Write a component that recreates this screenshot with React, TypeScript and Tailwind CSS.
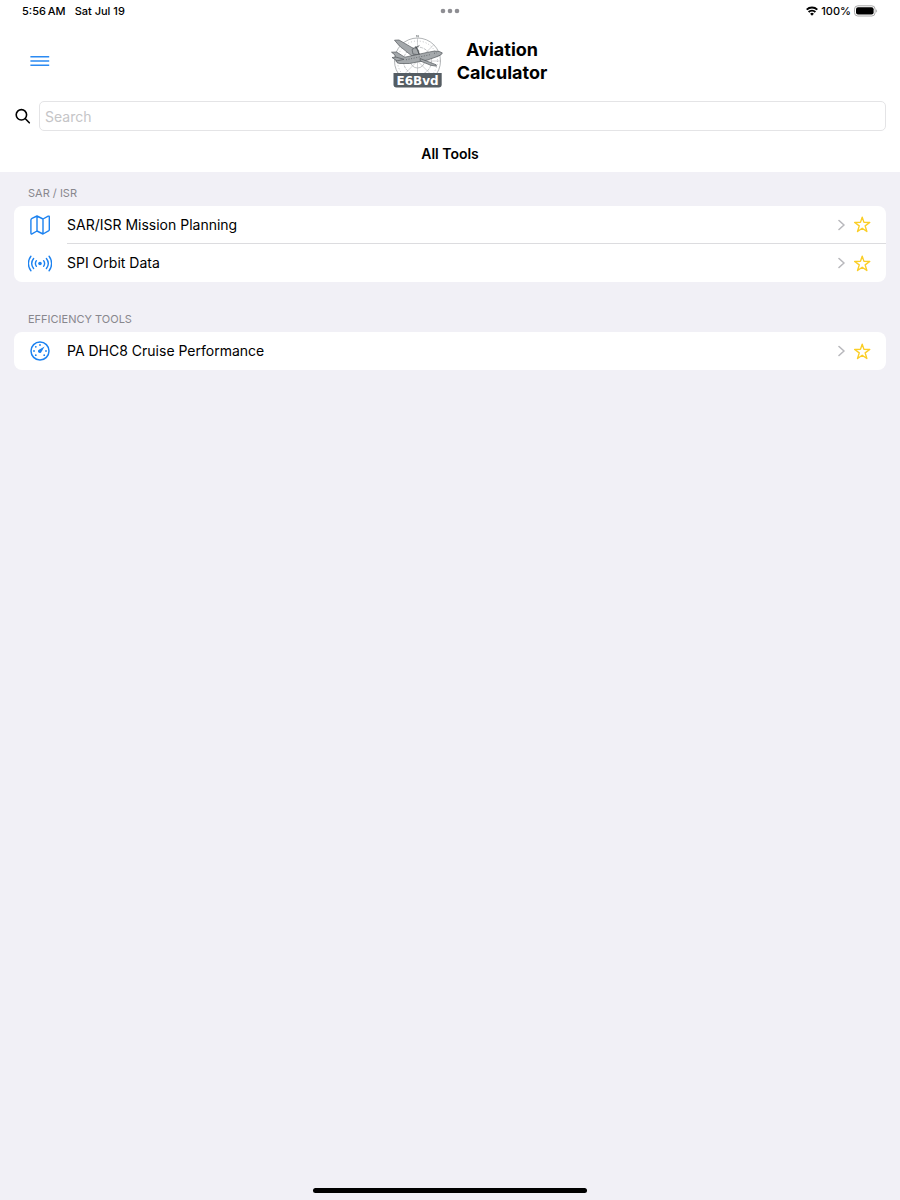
import type { ReactNode } from 'react'

type Tool = { name: string; icon: ReactNode }

const SECTIONS: { title: string; tools: Tool[] }[] = [
  {
    title: 'SAR / ISR',
    tools: [
      { name: 'SAR/ISR Mission Planning', icon: <MapIcon /> },
      { name: 'SPI Orbit Data', icon: <RadioIcon /> },
    ],
  },
  {
    title: 'EFFICIENCY TOOLS',
    tools: [{ name: 'PA DHC8 Cruise Performance', icon: <GaugeIcon /> }],
  },
]

export default function App() {
  return (
    <div className="min-h-screen flex flex-col bg-[#f1f0f6] text-black font-[Inter,sans-serif]">
      <div className="bg-white">
        <StatusBar />
        <Header />
        <SearchBar />
        <h2 className="pt-[13px] pb-2 text-center text-[14px] leading-5 font-semibold">All Tools</h2>
      </div>

      <main className="flex-1 px-3.5">
        {SECTIONS.map((section) => (
          <ToolSection key={section.title} title={section.title} tools={section.tools} />
        ))}
      </main>

      <footer className="flex justify-center pb-[7px]">
        <div className="h-[5px] w-[274px] rounded-full bg-black" />
      </footer>
    </div>
  )
}

function StatusBar() {
  return (
    <div className="grid grid-cols-3 items-center h-[22px] px-[22px] text-[11px] leading-4 font-medium">
      <div className="flex gap-[9px]">
        <span>5:56{'\u2009'}AM</span>
        <span>Sat Jul 19</span>
      </div>
      <svg className="w-5 h-[6px] justify-self-center" viewBox="0 0 20 6" fill="#8e8e93">
        <circle cx="3" cy="3" r="2.3" />
        <circle cx="10" cy="3" r="2.3" />
        <circle cx="17" cy="3" r="2.3" />
      </svg>
      <div className="flex items-center justify-end gap-[3px]">
        <WifiIcon />
        <span>100%</span>
        <BatteryIcon />
      </div>
    </div>
  )
}

function Header() {
  return (
    <header className="flex items-center h-[79px] pl-[30px] pr-3 pb-0.5">
      <button aria-label="Menu">
        <svg className="w-5 h-5" viewBox="0 0 20 20" fill="none" stroke="#2b8af2" strokeWidth={1.5}>
          <path d="M.4 5.7h18.8M.4 10h18.8M.4 14.3h18.8" />
        </svg>
      </button>
      <div className="flex-1 flex items-center justify-center gap-3.5">
        <Logo />
        <h1 className="text-[18px] leading-[23px] font-bold text-center">
          Aviation
          <br />
          Calculator
        </h1>
      </div>
    </header>
  )
}

function SearchBar() {
  return (
    <div className="flex items-center gap-2 pl-[15px] pr-3.5">
      <label htmlFor="search" aria-label="Search">
        <svg className="w-4 h-4" viewBox="0 0 16 16" fill="none" stroke="currentColor" strokeWidth={1.6} strokeLinecap="round">
          <circle cx="6.4" cy="6.8" r="5.2" />
          <path d="M10.4 10.8 14.3 14.8" />
        </svg>
      </label>
      <input
        id="search"
        type="text"
        placeholder="Search"
        className="flex-1 min-w-0 h-[30px] px-[5px] rounded-[5px] border border-[#e4e4e6] bg-white text-[14px] outline-none placeholder:text-[#c5c5c7]"
      />
    </div>
  )
}

function ToolSection({ title, tools }: { title: string; tools: Tool[] }) {
  return (
    <section className="pb-4">
      <h3 className="h-[34px] pt-[13px] px-3.5 text-[11px] leading-4 text-[#88878d]">{title}</h3>
      <ul className="rounded-[8px] bg-white overflow-hidden">
        {tools.map((tool, i) => (
          <li key={tool.name} className="flex items-center pl-3.5">
            <span className="w-[39px] shrink-0 text-[#1c82f0]">{tool.icon}</span>
            <div
              className={[
                'flex-1 min-w-0 flex items-center gap-2 h-[38px] pr-[15px] border-[#dcdcdf]',
                i < tools.length - 1 ? 'border-b' : '',
              ].join(' ')}
            >
              <a href="#" className="flex-1 flex items-center justify-between text-[14px] leading-5">
                {tool.name}
                <ChevronIcon />
              </a>
              <button aria-label={`Favorite ${tool.name}`}>
                <StarIcon />
              </button>
            </div>
          </li>
        ))}
      </ul>
    </section>
  )
}

function WifiIcon() {
  return (
    <svg className="w-3 h-3" viewBox="0 0 12 12" fill="none" stroke="currentColor" strokeWidth={1.9}>
      <path d="M.7 4.6a7.6 7.6 0 0 1 10.6 0M2.6 7a4.8 4.8 0 0 1 6.8 0" />
      <path d="M4.1 8.8a2.7 2.7 0 0 1 3.8 0L6 10.8z" fill="currentColor" stroke="none" />
    </svg>
  )
}

function BatteryIcon() {
  return (
    <svg className="w-6 h-3" viewBox="0 0 24 12">
      <rect x=".5" y=".8" width="20.6" height="10.2" rx="3.3" fill="none" stroke="#a9a9a9" />
      <rect x="2" y="2.3" width="17.6" height="7.2" rx="2" fill="#000" />
      <path d="M22.2 4.2c1.2.5 1.2 2.9 0 3.4z" fill="#a9a9a9" />
    </svg>
  )
}

function MapIcon() {
  return (
    <svg className="w-[24px] h-[24px]" viewBox="1 1 24 24" fill="none" stroke="currentColor" strokeWidth={1.4} strokeLinejoin="round">
      <path d="M5 6.3 10 4l6 3 5.2-2.8q1.1-.4 1.1.7v12.6q0 .9-.8 1.4L16 22l-6-3-5 2.8q-1.1.5-1.1-.7V8q0-1.2 1.1-1.7zM10 4v15M16 7v15" />
    </svg>
  )
}

function RadioIcon() {
  return (
    <svg className="w-[24px] h-[24px]" viewBox="1 1 24 24" fill="none" stroke="currentColor" strokeWidth={1.4} strokeLinecap="round">
      <circle cx="13" cy="13.5" r="1.8" fill="currentColor" stroke="none" />
      <path d="M9.4 10.7a4.8 4.8 0 0 0 0 5.6M16.6 10.7a4.8 4.8 0 0 1 0 5.6M6.6 8.5a8.2 8.2 0 0 0 0 10M19.4 8.5a8.2 8.2 0 0 1 0 10M3.9 6.3a11.6 11.6 0 0 0 0 14.4M22.1 6.3a11.6 11.6 0 0 1 0 14.4" />
    </svg>
  )
}

function GaugeIcon() {
  return (
    <svg className="w-[24px] h-[24px]" viewBox="1 1 24 24" fill="none" stroke="currentColor">
      <circle cx="13" cy="13" r="9" strokeWidth={1.5} />
      <path d="M17.6 8.6 14.4 14a1.8 1.8 0 1 1-2.5-2.3z" fill="currentColor" stroke="none" />
      <g fill="currentColor" stroke="none">
        <circle cx="13" cy="7" r=".9" />
        <circle cx="8.8" cy="8.8" r=".9" />
        <circle cx="7" cy="13" r=".9" />
        <circle cx="19" cy="13" r=".9" />
        <circle cx="8.8" cy="17.2" r=".9" />
        <circle cx="17.2" cy="17.2" r=".9" />
      </g>
    </svg>
  )
}

function ChevronIcon() {
  return (
    <svg className="w-2 h-3" viewBox="0 0 8 12" fill="none" stroke="#b9b9bd" strokeWidth={1.6} strokeLinecap="round" strokeLinejoin="round">
      <path d="M1 1.5 6 6l-5 4.5" />
    </svg>
  )
}

function StarIcon() {
  return (
    <svg className="block w-[17px] h-[17px]" viewBox="0 0 17 17" fill="none" stroke="#fbce26" strokeWidth={1.4} strokeLinejoin="round">
      <path d="m8.2 1.2 1.75 5.2 5.8.1-4.6 3.4 1.7 5.6-4.65-3.3-4.65 3.3 1.7-5.6L.7 6.5l5.75-.1z" />
    </svg>
  )
}

// Aircraft over a compass rose, with the name plate underneath
function Logo() {
  return (
    <svg className="w-[52px] h-[54px] shrink-0" viewBox="0 0 52 54" role="img" aria-label="E6Bvd">
      <g fill="none" stroke="#a8abae" strokeWidth={0.7}>
        <circle cx="26.5" cy="27" r="23" stroke="#8f9396" />
        <circle cx="26.5" cy="27" r="20" strokeDasharray="1 2" />
        <circle cx="26.5" cy="27" r="14" strokeDasharray="3 1" />
        <circle cx="26.5" cy="27" r="7" />
        <path d="M26.5 4v46M3.5 27h46M10.2 10.7l32.6 32.6M42.8 10.7 10.2 43.3" strokeWidth={0.5} />
      </g>
      <path d="M25.6 3.2V1l1.8 2.2V1" fill="none" stroke="#73787b" strokeWidth={0.6} />
      <g fill="#a4a8ab" stroke="#55595d" strokeWidth={0.7} strokeLinejoin="round">
        <path d="M3.5 6.2 8 6l14 8.2 7 6.5-8 1.4L8.5 12z" />
        <path d="m21 15.5 4-2.3 2.7 3.5.3 4-6-.6z" />
        <path d="m.5 18.2 5-.2 8.3 5.2 25-5.3 4.6-.8q5.4-.2 8 1.8-.4 2.3-6.4 4.1l-8.5 3-18 3.5H8.3q-3-.7-3.2-2.5L4 21z" />
        <path d="m29 24.5 16 6.2.5 1.5-5.7-.9-10.5-4.3z" />
        <path d="m1 23.5 4-.4 8 2.2-7 1.6z" />
      </g>
      <path d="m24.7 12 3.6 8.5M28.4 11.5l-4.2 2.7" stroke="#44494c" strokeWidth={0.8} />
      <path d="M15 25.8 39.5 20.6M43 19.3l3-.5" fill="none" stroke="#585d61" strokeWidth={0.8} strokeDasharray="1 1.6" />
      <path d="M2.5 39h48.2v11.4q0 3-3 3H5.5q-3 0-3-3z" fill="#555d63" />
      <text
        x="26.5"
        y="50.5"
        textAnchor="middle"
        fill="#fff"
        className="font-['DejaVu_Sans',sans-serif] text-[12px] font-bold"
      >
        E6Bvd
      </text>
    </svg>
  )
}
